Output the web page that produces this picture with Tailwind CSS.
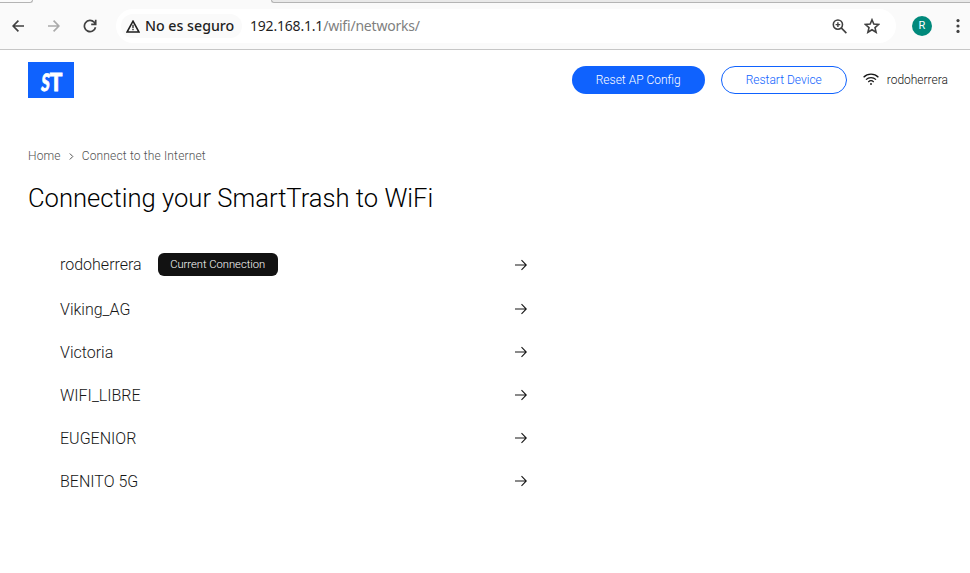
<!DOCTYPE html>
<html lang="es">
<head>
<meta charset="utf-8">
<title>Connecting your SmartTrash to WiFi</title>
<script src="https://cdn.jsdelivr.net/npm/@tailwindcss/browser@4"></script>
</head>
<body class="h-[573px] w-[970px] overflow-hidden bg-white font-['Roboto',sans-serif] font-light text-[#161616]">

<!-- Browser toolbar -->
<div class="flex h-[50px] flex-col border-b border-[#c6c6c6] bg-[#fafafa]">
  <div class="flex h-[3px] shrink-0 justify-between">
    <div class="w-[33px] rounded-br-[8px] border-r border-b border-[#b4b4b4] bg-[#fafafa]"></div>
    <div class="w-[699px] rounded-bl-[8px] border-b border-l border-[#b4b4b4] bg-[#e9e9e9]"></div>
  </div>
  <div class="mt-[6px] flex h-[34px] items-center">
    <svg class="ml-[12px] size-3" viewBox="0 0 12 12" fill="none" stroke="#404040" stroke-width="1.7"><path d="M12 6H1M6.4.7 1.1 6l5.3 5.3"/></svg>
    <svg class="ml-6 size-3" viewBox="0 0 12 12" fill="none" stroke="#aaa" stroke-width="1.7"><path d="M0 6h11M5.6.7 10.9 6l-5.3 5.3"/></svg>
    <svg class="ml-[23px] size-[14px]" viewBox="0 0 14 14" fill="none" stroke="#404040" stroke-width="1.7"><path d="M12.5 8.2A5.6 5.6 0 1 1 11.2 3.3L12.6 4.8M12.7.8v4.5H8.2"/></svg>
    <div class="ml-[19px] flex h-[34px] w-[780px] items-center rounded-full bg-white pl-[5px] font-['Noto_Sans','Open_Sans',sans-serif] text-[14px] font-normal whitespace-nowrap">
      <div class="flex h-6 w-[121px] items-center rounded-full bg-[#fafafa] pl-[5px]">
        <svg class="h-[13px] w-[14px]" viewBox="0 0 14 13" fill="none" stroke="#1f1f1f" stroke-width="1.6"><path d="M7 1.2 13 12H1Z"/><path d="M7 4.8v3.4M7 9v1.3" stroke-width="1.3"/></svg>
        <span class="ml-[5px] text-[14.2px] font-medium text-[#1f1f1f]">No es seguro</span>
      </div>
      <span class="ml-[8px] pb-px text-[14px] tracking-[-0.2px] text-[#1f1f1f]">192.168.1.1<span class="text-[#808080]">/wifi/networks/</span></span>
      <svg class="mr-[17px] ml-auto size-[15px]" viewBox="0 0 15 15" fill="none" stroke="#404040" stroke-width="1.6"><circle cx="5.9" cy="5.6" r="4.6"/><path d="m9.2 8.9 5.2 5.2"/><path d="M5.9 3.3v4.6M3.6 5.6h4.6" stroke-width="1.4"/></svg>
      <svg class="mr-[16px] size-4" viewBox="0 0 16 16" fill="none" stroke="#404040" stroke-width="1.6"><path d="m8 1.8 1.8 4.3 4.8.4-3.6 3.1 1.1 4.7L8 11.8l-4.1 2.5L5 9.6 1.4 6.5l4.8-.4Z"/></svg>
    </div>
    <div class="ml-4 flex size-5 items-center justify-center rounded-full bg-[#00897b] pt-px text-[11px] font-normal text-white">R</div>
    <svg class="ml-[24px] h-4 w-[4px]" viewBox="0 0 4 16" fill="#404040"><circle cx="2" cy="2.6" r="1.6"/><circle cx="2" cy="8" r="1.6"/><circle cx="2" cy="13.4" r="1.6"/></svg>
  </div>
</div>

<!-- Site header -->
<header class="flex h-[60px] items-center pr-[22px] pl-7 text-[12px] whitespace-nowrap">
  <div class="h-9 w-[46px] bg-[#0f62fe]">
    <svg class="h-9 w-[46px]" viewBox="0 0 46 36" font-family="Lato, sans-serif" font-weight="900" font-size="24" fill="#fff" stroke="#fff" stroke-width=".8"><text transform="translate(12.5 28.5) skewX(-6) scale(.64 1)">S</text><text transform="translate(21.8 28.5) scale(.87 1)">T</text></svg>
  </div>
  <button class="ml-auto h-7 w-[133px] rounded-full bg-[#0f62fe] text-white">Reset AP Config</button>
  <button class="ml-4 h-7 w-[126px] rounded-full border border-[#0f62fe] text-[#0f62fe]">Restart Device</button>
  <svg class="mr-2 mb-[3px] ml-4 h-3 w-4" viewBox="0 0 16 12" fill="none" stroke="#161616" stroke-width="1.3"><path d="M.6 4.2C4.8.1 11.2.1 15.4 4.2M3 6.6c2.8-2.7 7.2-2.7 10 0M5.3 8.9c1.5-1.4 3.9-1.4 5.4 0"/><circle cx="8" cy="11" r=".9" fill="#161616" stroke="none"/></svg>
  <span>rodoherrera</span>
</header>

<main class="pl-7">
  <nav class="mt-[37px] flex h-[18px] items-center text-[12px] tracking-[0.16px] text-[#525252]">
    <span>Home</span>
    <svg class="mx-2 h-[7px] w-[5px]" viewBox="0 0 5 7" fill="none" stroke="#525252"><path d="m.8.5 3 3-3 3"/></svg>
    <span>Connect to the Internet</span>
  </nav>
  <h1 class="mt-[15px] h-9 text-[25.6px] leading-9 font-light whitespace-nowrap text-black">Connecting your SmartTrash to WiFi</h1>
  <ul class="mt-[26px] w-[499px] pl-8 text-[16px]">
    <li class="flex h-[45px] items-center">
      <span>rodoherrera</span>
      <span class="ml-4 flex h-[23px] w-[120px] items-center justify-center rounded-md bg-[#121212] pt-px text-[11.2px] text-white">Current Connection</span>
      <svg class="ml-auto h-3 w-[12px]" viewBox="0 0 12 12" fill="none" stroke="#161616" stroke-width="1.1"><path d="M0 6h11.2M6.5 1.2 11.3 6l-4.8 4.8"/></svg>
    </li>
    <li class="flex h-[43px] items-center justify-between"><span class="pt-0.5">Viking_AG</span><svg class="h-3 w-[12px]" viewBox="0 0 12 12" fill="none" stroke="#161616" stroke-width="1.1"><path d="M0 6h11.2M6.5 1.2 11.3 6l-4.8 4.8"/></svg></li>
    <li class="flex h-[43px] items-center justify-between"><span class="pt-0.5">Victoria</span><svg class="h-3 w-[12px]" viewBox="0 0 12 12" fill="none" stroke="#161616" stroke-width="1.1"><path d="M0 6h11.2M6.5 1.2 11.3 6l-4.8 4.8"/></svg></li>
    <li class="flex h-[43px] items-center justify-between"><span class="pt-0.5">WIFI_LIBRE</span><svg class="h-3 w-[12px]" viewBox="0 0 12 12" fill="none" stroke="#161616" stroke-width="1.1"><path d="M0 6h11.2M6.5 1.2 11.3 6l-4.8 4.8"/></svg></li>
    <li class="flex h-[43px] items-center justify-between"><span class="pt-0.5">EUGENIOR</span><svg class="h-3 w-[12px]" viewBox="0 0 12 12" fill="none" stroke="#161616" stroke-width="1.1"><path d="M0 6h11.2M6.5 1.2 11.3 6l-4.8 4.8"/></svg></li>
    <li class="flex h-[43px] items-center justify-between"><span class="pt-0.5">BENITO 5G</span><svg class="h-3 w-[12px]" viewBox="0 0 12 12" fill="none" stroke="#161616" stroke-width="1.1"><path d="M0 6h11.2M6.5 1.2 11.3 6l-4.8 4.8"/></svg></li>
  </ul>
</main>
</body>
</html>
